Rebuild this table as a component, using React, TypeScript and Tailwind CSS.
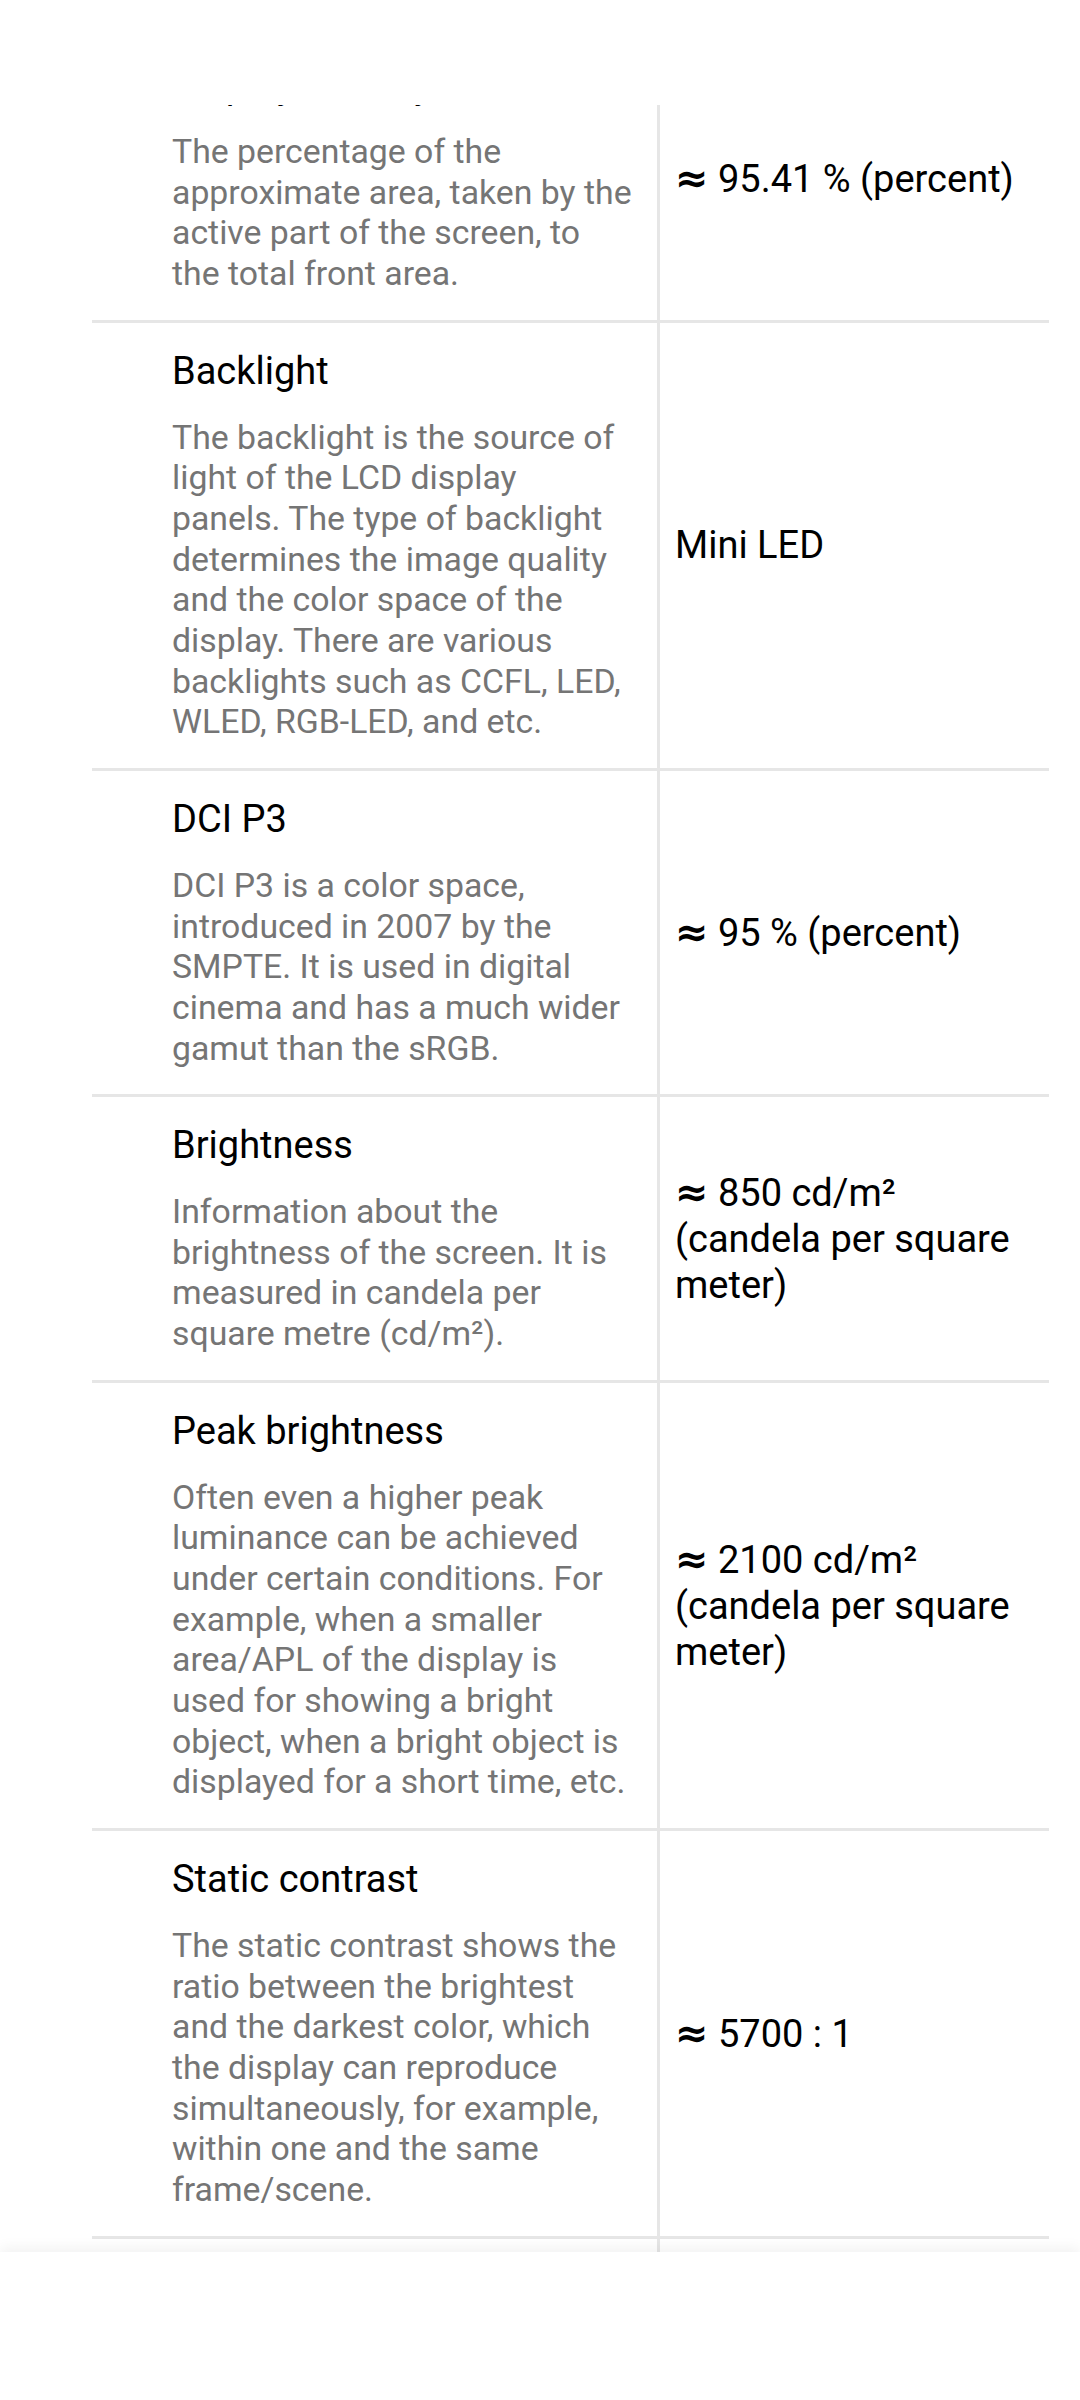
import React from "react";

type Row = { title: string; desc: string[]; value: string[]; approx?: boolean };

const rows: Row[] = [
  {
    title: "Display-to-body ratio",
    desc: [
      "The percentage of the",
      "approximate area, taken by the",
      "active part of the screen, to",
      "the total front area.",
    ],
    value: ["95.41 % (percent)"],
    approx: true,
  },
  {
    title: "Backlight",
    desc: [
      "The backlight is the source of",
      "light of the LCD display",
      "panels. The type of backlight",
      "determines the image quality",
      "and the color space of the",
      "display. There are various",
      "backlights such as CCFL, LED,",
      "WLED, RGB-LED, and etc.",
    ],
    value: ["Mini LED"],
  },
  {
    title: "DCI P3",
    desc: [
      "DCI P3 is a color space,",
      "introduced in 2007 by the",
      "SMPTE. It is used in digital",
      "cinema and has a much wider",
      "gamut than the sRGB.",
    ],
    value: ["95 % (percent)"],
    approx: true,
  },
  {
    title: "Brightness",
    desc: [
      "Information about the",
      "brightness of the screen. It is",
      "measured in candela per",
      "square metre (cd/m²).",
    ],
    value: ["850 cd/m²", "(candela per square", "meter)"],
    approx: true,
  },
  {
    title: "Peak brightness",
    desc: [
      "Often even a higher peak",
      "luminance can be achieved",
      "under certain conditions. For",
      "example, when a smaller",
      "area/APL of the display is",
      "used for showing a bright",
      "object, when a bright object is",
      "displayed for a short time, etc.",
    ],
    value: ["2100 cd/m²", "(candela per square", "meter)"],
    approx: true,
  },
  {
    title: "Static contrast",
    desc: [
      "The static contrast shows the",
      "ratio between the brightest",
      "and the darkest color, which",
      "the display can reproduce",
      "simultaneously, for example,",
      "within one and the same",
      "frame/scene.",
    ],
    value: ["5700 : 1"],
    approx: true,
  },
];

function SpecRow({ row }: { row: Row }) {
  return (
    <div className="grid grid-cols-[568px_389px] border-b-[3px] border-[#e6e6e6]">
      <div className="border-r-[3px] border-[#e6e6e6] pl-[80px] pr-4 pt-[25px] pb-[25px]">
        <div className="text-[38px] leading-[46px] text-black whitespace-nowrap">{row.title}</div>
        <div className="mt-[24px] text-[33.8px] leading-[40.65px] text-[#757575]">
          {row.desc.map((l, i) => (
            <div key={i} className="whitespace-nowrap">
              {l}
            </div>
          ))}
        </div>
      </div>
      <div className="flex flex-col justify-center pl-[15px] text-[38px] leading-[46px] text-black">
        {row.value.map((l, i) => (
          <div key={i} className="whitespace-nowrap">
            {i === 0 && row.approx ? (
              <>
                <span className="font-['DejaVu_Sans',sans-serif] font-bold text-[40px] leading-[46px]">≈</span>{" "}
              </>
            ) : null}
            {l}
          </div>
        ))}
      </div>
    </div>
  );
}

export default function App() {
  return (
    <div className="w-[1080px] h-[2400px] bg-white flex flex-col overflow-hidden font-['Roboto',sans-serif]">
      <div className="h-[105px] shrink-0 bg-white" />
      <div className="h-[2147px] shrink-0 overflow-hidden">
        <div className="-mt-[68px] ml-[92px] w-[957px]">
          {rows.map((r, i) => (
            <SpecRow key={i} row={r} />
          ))}
          <div className="grid grid-cols-[568px_389px] h-[300px]">
            <div className="border-r-[3px] border-[#e6e6e6]" />
            <div />
          </div>
        </div>
      </div>
      <div className="flex-1 bg-white relative z-10 shadow-[0_-5px_12px_rgba(0,0,0,0.05)]" />
    </div>
  );
}
